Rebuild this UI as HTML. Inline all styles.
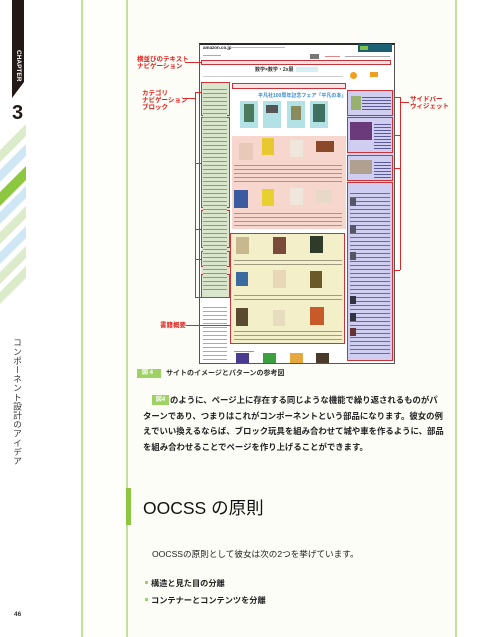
<!DOCTYPE html>
<html><head><meta charset="utf-8"><style>
*{margin:0;padding:0;box-sizing:border-box}
body{width:500px;height:637px;position:relative;background:#fff;overflow:hidden;font-family:"Liberation Sans","Noto Sans CJK JP",sans-serif}
.a{position:absolute}
.vl{position:absolute;top:0;height:637px;width:2px;background:#c3df9c}
.red{color:#e0201c;font-weight:bold;font-size:6.5px;line-height:7px}
.rl{position:absolute;background:#d8282a}
.box{position:absolute;border:1px solid #c9333a}
.ln{position:absolute;height:1px;background:#9a9a9a}
.cv{position:absolute}
.p{position:absolute;left:143px;font-size:8.4px;font-weight:bold;color:#222;letter-spacing:0;white-space:nowrap}
</style></head><body>
<div class="a" style="left:128px;top:0;width:328px;height:637px;background:#fdfdf7"></div>
<div class="a" style="left:82px;top:0;width:45px;height:637px;background:#fefefb"></div>
<div class="vl" style="left:81px"></div>
<div class="vl" style="left:126px"></div>
<div class="vl" style="left:455px"></div>

<svg class="a" style="left:0;top:0" width="30" height="310">
<polygon points="12,0 24,0 24,82 12,98" fill="#231815"/>
<defs><clipPath id="c"><rect x="0" y="120" width="26" height="185"/></clipPath></defs>
<g clip-path="url(#c)">
<polygon points="0,150 30,120 30,132 0,162" fill="#dcebc9"/>
<polygon points="0,170 30,140 30,152 0,182" fill="#cfe6f5"/>
<polygon points="0,192 30,162 30,176 0,206" fill="#8dc63f"/>
<polygon points="0,212 30,182 30,194 0,224" fill="#cfe6f5"/>
<polygon points="0,232 30,202 30,214 0,244" fill="#dcebc9"/>
<polygon points="0,252 30,222 30,234 0,264" fill="#cfe6f5"/>
<polygon points="0,272 30,242 30,254 0,284" fill="#dcebc9"/>
<polygon points="0,292 30,262 30,274 0,304" fill="#dcebc9"/>
</g>
</svg>
<div class="a" style="left:14px;top:50px;width:9px;height:32px;writing-mode:vertical-rl;color:#fff;font-size:6.5px;font-weight:bold;line-height:9px">CHAPTER</div>
<div class="a" style="left:12px;top:103px;font-size:20px;font-weight:bold;color:#231815;line-height:20px">3</div>
<div class="a" style="left:12px;top:338px;writing-mode:vertical-rl;font-size:8.8px;color:#333;line-height:9px;letter-spacing:0.3px">コンポーネント設計のアイデア</div>
<div class="a" style="left:14px;top:611px;font-size:6.5px;font-weight:bold;color:#333">46</div>

<div class="a" style="left:199px;top:43px;width:196px;height:321px;background:#fff;border:1px solid #555;border-top:2px solid #2a2a2a"></div>
<div class="a" style="left:203px;top:45px;font-size:4.5px;font-weight:bold;color:#222">amazon.co.jp</div>
<div class="ln" style="left:230px;top:47px;width:55px;background:#bbb"></div>
<div class="a" style="left:358px;top:44px;width:34px;height:8px;background:#1d5f73"></div>
<div class="a" style="left:360px;top:46px;width:8px;height:4px;background:#7fc24a"></div>
<div class="a" style="left:310px;top:54px;width:9px;height:5px;background:#777"></div>
<div class="ln" style="left:325px;top:56px;width:15px;background:#d88"></div>
<div class="ln" style="left:345px;top:56px;width:45px;background:#aaa"></div>
<div class="ln" style="left:203px;top:55px;width:18px;background:#aaa"></div>
<div class="box" style="left:201px;top:60px;width:190px;height:5px;background:#fbe2e2;border-width:1.5px"></div>
<div class="a" style="left:255px;top:66px;font-size:5px;font-weight:bold;color:#333">数学×数学・2x展</div>
<div class="a" style="left:296px;top:67px;width:22px;height:5px;background:#d8eef5"></div>
<div class="ln" style="left:203px;top:76px;width:140px;background:#ccc"></div>
<div class="a" style="left:350px;top:72px;width:7px;height:7px;border-radius:50%;background:#f0a020"></div>
<div class="a" style="left:370px;top:72px;width:8px;height:5px;background:#f0a020"></div>
<div class="a" style="left:201px;top:82px;width:29px;height:216px;background:#d9e6cc"></div>
<div class="box" style="left:201px;top:82px;width:29px;height:34px"></div>
<div class="box" style="left:201px;top:117px;width:29px;height:91px"></div>
<div class="box" style="left:201px;top:210px;width:29px;height:38px"></div>
<div class="box" style="left:201px;top:251px;width:29px;height:16px"></div>
<div class="box" style="left:201px;top:274px;width:29px;height:24px"></div>
<div class="a" style="left:203px;top:86px;width:24px;height:205px;background:repeating-linear-gradient(#d9e6cc 0 3px,#8b9a80 3px 4px)"></div>
<div class="a" style="left:203px;top:304px;width:24px;height:56px;background:repeating-linear-gradient(#fff 0 3px,#aaa 3px 4px)"></div>
<div class="box" style="left:232px;top:83px;width:114px;height:6px;background:#fbe2e2"></div>
<div class="a" style="left:258px;top:92px;font-size:5px;color:#3a8ccf;font-weight:bold">平凡社100周年記念フェア「平凡の本」</div>
<div class="cv" style="left:240px;top:101px;width:18px;height:27px;background:#b2e1e6"></div>
<div class="cv" style="left:244px;top:104px;width:10px;height:18px;background:#4b7a5a"></div>
<div class="cv" style="left:263px;top:101px;width:18px;height:27px;background:#b2e1e6"></div>
<div class="cv" style="left:266px;top:105px;width:12px;height:8px;background:#555"></div>
<div class="cv" style="left:287px;top:101px;width:18px;height:27px;background:#b2e1e6"></div>
<div class="cv" style="left:291px;top:106px;width:10px;height:14px;background:#8a8a5a"></div>
<div class="cv" style="left:310px;top:101px;width:18px;height:27px;background:#b2e1e6"></div>
<div class="cv" style="left:313px;top:104px;width:12px;height:18px;background:#3f6f60"></div>
<div class="a" style="left:232px;top:136px;width:114px;height:93px;background:#f7d6cd"></div>
<div class="cv" style="left:239px;top:143px;width:14px;height:17px;background:#e8c8b8"></div>
<div class="cv" style="left:262px;top:138px;width:12px;height:17px;background:#e8c830"></div>
<div class="cv" style="left:290px;top:140px;width:13px;height:17px;background:#efe6dc"></div>
<div class="cv" style="left:316px;top:141px;width:18px;height:11px;background:#8a4a2a"></div>
<div class="cv" style="left:234px;top:190px;width:14px;height:18px;background:#3b5aa0"></div>
<div class="cv" style="left:262px;top:189px;width:12px;height:17px;background:#e8d030"></div>
<div class="cv" style="left:290px;top:188px;width:13px;height:17px;background:#efe6dc"></div>
<div class="cv" style="left:316px;top:190px;width:16px;height:13px;background:#e8d8c8"></div>
<div class="a" style="left:234px;top:162px;width:108px;height:20px;background:repeating-linear-gradient(#f7d6cd 0 3px,#b09088 3px 4px)"></div>
<div class="a" style="left:234px;top:210px;width:108px;height:16px;background:repeating-linear-gradient(#f7d6cd 0 3px,#b09088 3px 4px)"></div>
<div class="box" style="left:230px;top:233px;width:115px;height:111px;background:#f3efc8;border-width:1.5px"></div>
<div class="cv" style="left:236px;top:237px;width:13px;height:17px;background:#c8b890"></div>
<div class="cv" style="left:273px;top:237px;width:13px;height:17px;background:#7a4a3a"></div>
<div class="cv" style="left:310px;top:236px;width:13px;height:17px;background:#2f3a2a"></div>
<div class="cv" style="left:236px;top:272px;width:12px;height:14px;background:#3a6aa0"></div>
<div class="cv" style="left:273px;top:270px;width:13px;height:18px;background:#e8d8b8"></div>
<div class="cv" style="left:310px;top:271px;width:12px;height:17px;background:#6a5a2a"></div>
<div class="cv" style="left:236px;top:308px;width:12px;height:18px;background:#5a4a30"></div>
<div class="cv" style="left:273px;top:310px;width:12px;height:16px;background:#e8dcc0"></div>
<div class="cv" style="left:310px;top:307px;width:14px;height:18px;background:#c85a2a"></div>
<div class="a" style="left:234px;top:257px;width:108px;height:10px;background:repeating-linear-gradient(#f3efc8 0 3px,#a09a80 3px 4px)"></div>
<div class="a" style="left:234px;top:292px;width:108px;height:10px;background:repeating-linear-gradient(#f3efc8 0 3px,#a09a80 3px 4px)"></div>
<div class="a" style="left:234px;top:328px;width:108px;height:12px;background:repeating-linear-gradient(#f3efc8 0 3px,#a09a80 3px 4px)"></div>
<div class="ln" style="left:234px;top:351px;width:20px;background:#e08050"></div>
<div class="cv" style="left:236px;top:353px;width:13px;height:10px;background:#4a3a90"></div>
<div class="cv" style="left:263px;top:353px;width:13px;height:10px;background:#3aa040"></div>
<div class="cv" style="left:290px;top:353px;width:13px;height:10px;background:#e8a840"></div>
<div class="cv" style="left:316px;top:353px;width:13px;height:10px;background:#4a3a2a"></div>
<div class="a" style="left:347px;top:90px;width:47px;height:271px;background:#cfcdf0"></div>
<div class="box" style="left:347px;top:90px;width:46px;height:26px"></div>
<div class="box" style="left:347px;top:117px;width:46px;height:36px"></div>
<div class="box" style="left:347px;top:155px;width:46px;height:26px"></div>
<div class="box" style="left:347px;top:182px;width:46px;height:179px"></div>
<div class="cv" style="left:351px;top:96px;width:10px;height:14px;background:#9ab070"></div>
<div class="cv" style="left:350px;top:122px;width:22px;height:18px;background:#6a3a7a"></div>
<div class="cv" style="left:350px;top:160px;width:22px;height:14px;background:#b0a090"></div>
<div class="a" style="left:362px;top:95px;width:29px;height:17px;background:repeating-linear-gradient(#cfcdf0 0 2px,#5a5a9a 2px 3px)"></div>
<div class="a" style="left:374px;top:122px;width:17px;height:28px;background:repeating-linear-gradient(#cfcdf0 0 2px,#5a5a9a 2px 3px)"></div>
<div class="a" style="left:374px;top:160px;width:17px;height:18px;background:repeating-linear-gradient(#cfcdf0 0 2px,#5a5a9a 2px 3px)"></div>
<div class="a" style="left:350px;top:190px;width:40px;height:165px;background:repeating-linear-gradient(#cfcdf0 0 3px,#6a6aa0 3px 4px)"></div>
<div class="cv" style="left:350px;top:198px;width:6px;height:8px;background:#556"></div>
<div class="cv" style="left:350px;top:225px;width:6px;height:8px;background:#556"></div>
<div class="cv" style="left:350px;top:252px;width:6px;height:8px;background:#556"></div>
<div class="cv" style="left:350px;top:296px;width:6px;height:8px;background:#334"></div>
<div class="cv" style="left:350px;top:313px;width:6px;height:8px;background:#334"></div>
<div class="cv" style="left:350px;top:328px;width:6px;height:8px;background:#633"></div>

<div class="a red" style="left:137px;top:56px">横並びのテキスト<br>ナビゲーション</div>
<div class="rl" style="left:185px;top:62px;width:17px;height:1px"></div>
<div class="a red" style="left:142px;top:90px">カテゴリ<br>ナビゲーション<br>ブロック</div>
<div class="rl" style="left:183px;top:98px;width:12px;height:1px"></div>
<div class="rl" style="left:195px;top:92px;width:1px;height:206px"></div>
<div class="rl" style="left:195px;top:92px;width:6px;height:1px"></div>
<div class="rl" style="left:195px;top:163px;width:6px;height:1px"></div>
<div class="rl" style="left:195px;top:229px;width:6px;height:1px"></div>
<div class="rl" style="left:195px;top:259px;width:6px;height:1px"></div>
<div class="rl" style="left:195px;top:297px;width:6px;height:1px"></div>
<div class="a red" style="left:410px;top:96px">サイドバー<br>ウィジェット</div>
<div class="rl" style="left:400px;top:102px;width:9px;height:1px"></div>
<div class="rl" style="left:400px;top:97px;width:1px;height:173px"></div>
<div class="rl" style="left:394px;top:97px;width:6px;height:1px"></div>
<div class="rl" style="left:394px;top:135px;width:6px;height:1px"></div>
<div class="rl" style="left:394px;top:168px;width:6px;height:1px"></div>
<div class="rl" style="left:394px;top:270px;width:6px;height:1px"></div>
<div class="a red" style="left:160px;top:322px">書籍概要</div>
<div class="rl" style="left:186px;top:325px;width:45px;height:1px"></div>

<div class="a" style="left:137px;top:369px;width:24px;height:9px;background:#9fd264;color:#fff;font-size:6px;font-weight:bold;line-height:9px;padding-left:5px">図 4</div>
<div class="a" style="left:166px;top:369px;font-size:7px;font-weight:bold;color:#333;line-height:9px">サイトのイメージとパターンの参考図</div>

<div class="a" style="left:152px;top:395px;width:17px;height:10px;background:#9fd264;color:#fff;font-size:6px;font-weight:bold;line-height:10px;text-align:center">図4</div>
<div class="p" style="top:394px;left:170px">のように、ページ上に存在する同じような機能で繰り返されるものがパ</div>
<div class="p" style="top:410px">ターンであり、つまりはこれがコンポーネントという部品になります。彼女の例</div>
<div class="p" style="top:425px">えでいい換えるならば、ブロック玩具を組み合わせて城や車を作るように、部品</div>
<div class="p" style="top:441px">を組み合わせることでページを作り上げることができます。</div>

<div class="a" style="left:126px;top:488px;width:5px;height:37px;background:#8dc63f"></div>
<div class="a" style="left:143px;top:497px;font-size:17.5px;color:#111;line-height:22px">OOCSS の原則</div>

<div class="a" style="left:152px;top:548px;font-size:8.6px;color:#222;white-space:nowrap">OOCSSの原則として彼女は次の2つを挙げています。</div>
<div class="a" style="left:145px;top:581px;width:3px;height:3px;background:#9fd264"></div>
<div class="a" style="left:151px;top:577px;font-size:8.2px;font-weight:bold;color:#222">構造と見た目の分離</div>
<div class="a" style="left:145px;top:598px;width:3px;height:3px;background:#9fd264"></div>
<div class="a" style="left:151px;top:594px;font-size:8.2px;font-weight:bold;color:#222">コンテナーとコンテンツを分離</div>
</body></html>
